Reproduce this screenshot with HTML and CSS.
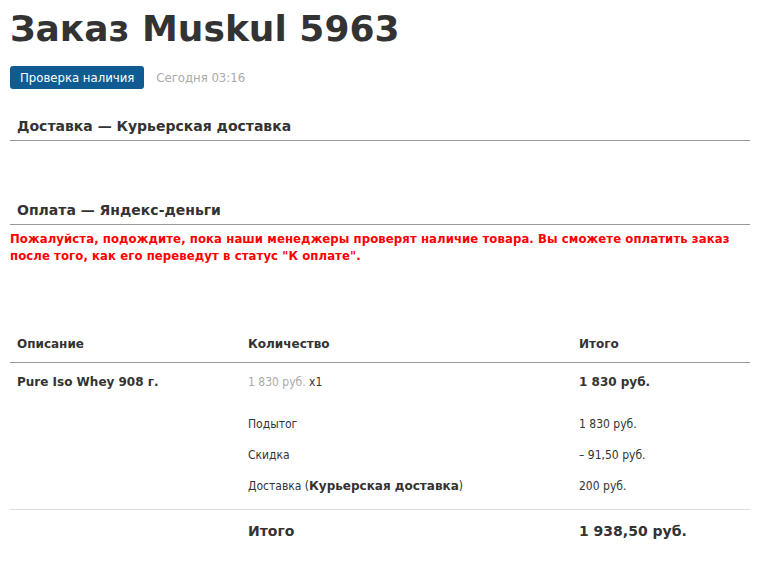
FILE: index.html
```html
<!DOCTYPE html>
<html lang="ru">
<head>
<meta charset="utf-8">
<link rel="stylesheet" href="styles.css">
</head>
<body>
<div class="page">
  <h1 class="title">Заказ Muskul 5963</h1>
  <div class="status">
    <span class="badge">Проверка наличия</span>
    <span class="date">Сегодня 03:16</span>
  </div>

  <h2 class="section">Доставка — Курьерская доставка</h2>
  <div class="gap"></div>
  <h2 class="section">Оплата — Яндекс-деньги</h2>
  <p class="warn">Пожалуйста, подождите, пока наши менеджеры проверят наличие товара. Вы сможете оплатить заказ после того, как его переведут в статус "К оплате".</p>

  <table class="items">
    <thead>
      <tr><th class="c1">Описание</th><th class="c2">Количество</th><th class="c3">Итого</th></tr>
    </thead>
    <tbody>
      <tr class="item"><td class="name">Pure Iso Whey 908 г.</td><td><span class="muted">1 830 руб.</span> x1</td><td class="strong">1 830 руб.</td></tr>
      <tr class="sub first"><td></td><td>Подытог</td><td>1 830 руб.</td></tr>
      <tr class="sub"><td></td><td>Скидка</td><td>– 91,50 руб.</td></tr>
      <tr class="sub last"><td></td><td>Доставка (<b>Курьерская доставка</b>)</td><td>200 руб.</td></tr>
      <tr class="total"><td></td><td>Итого</td><td>1 938,50 руб.</td></tr>
    </tbody>
  </table>
</div>
</body>
</html>
```

FILE: styles.css
```css
* { box-sizing: border-box; }
body {
  margin: 0;
  background: #fff;
  color: #333;
  font-family: "DejaVu Sans Condensed", "DejaVu Sans", sans-serif;
  font-size: 12px;
}
b, .name, .strong, th, .title, .section, .total td {
  font-family: "DejaVu Sans", Verdana, sans-serif;
  font-weight: bold;
}
.page {
  padding: 0 7px 0 10px;
}
.title {
  margin: 0;
  padding-top: 8px;
  font-size: 36px;
  line-height: 42px;
  color: #333;
}
.status {
  display: flex;
  align-items: center;
  gap: 12px;
  margin-top: 16px;
  height: 23px;
}
.badge {
  background: #105b92;
  color: #fff;
  border-radius: 3px;
  padding: 0 10px;
  height: 23px;
  line-height: 23px;
  font-size: 13px;
}
.date {
  color: #aaa;
  font-size: 13px;
}
.section {
  margin: 0;
  font-size: 14px;
  color: #333;
  padding: 2px 7px 5px;
  border-bottom: 1px solid #999;
  line-height: 17px;
}
.status + .section { margin-top: 27px; }
.gap { height: 59px; }
.warn {
  margin: 5px 0 0;
  color: #f00;
  font-weight: bold;
  font-size: 13px;
  line-height: 17px;
  letter-spacing: 0.08px;
}
.items {
  width: 740px;
  border-collapse: collapse;
  margin-top: 60px;
}
.items th, .items td {
  text-align: left;
  vertical-align: top;
  padding: 0 7px;
}
.c1 { width: 231px; }
.c2 { width: 331px; }
.c3 { width: 178px; }
.items th {
  height: 38px;
  padding-top: 2px;
  vertical-align: middle;
  border-bottom: 1px solid #999;
}
.item td { padding-top: 12px; height: 50px; }
.muted { color: #aaa; }
.sub td { height: 31px; padding-top: 7px; }
.sub.first td { height: 29px; padding-top: 5px; }
.sub.last td { border-bottom: 1px solid #ddd; height: 37px; }
.total td {
  font-size: 14px;
  padding-top: 13px;
  height: 44px;
}
```
